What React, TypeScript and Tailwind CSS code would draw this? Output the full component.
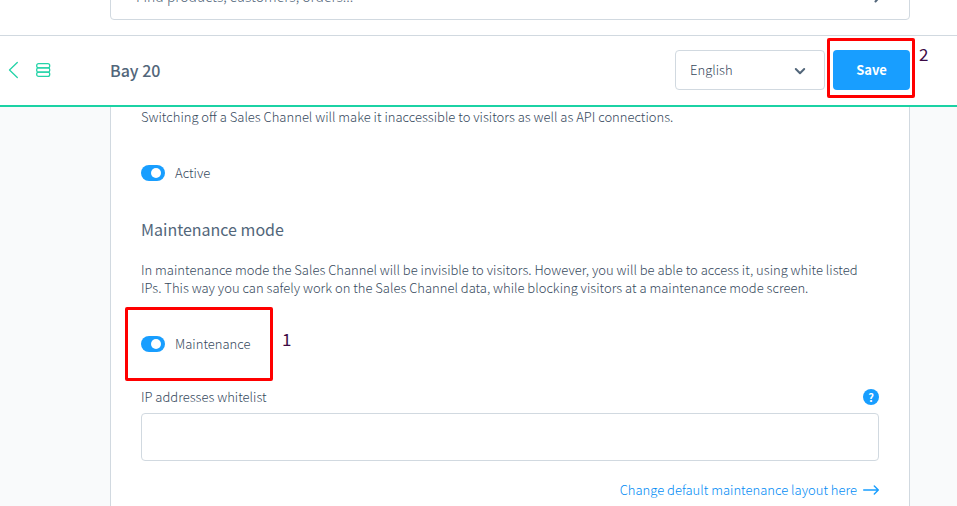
import React, { useState } from 'react';

interface SwitchFieldProps {
  id: string;
  label: string;
  className?: string;
}

const SwitchField: React.FC<SwitchFieldProps> = ({ id, label, className = '' }) => {
  const [checked, setChecked] = useState(true);

  return (
    <div className={`flex items-center gap-[10px] ${className}`}>
      <input
        id={id}
        type="checkbox"
        checked={checked}
        onChange={(e) => setChecked(e.target.checked)}
        className="flex h-4 w-6 appearance-none items-center rounded-full bg-[#d1d9e0] px-1 before:block before:h-[10px] before:w-[10px] before:rounded-full before:bg-white checked:justify-end checked:bg-[#189eff]"
      />
      <label htmlFor={id}>{label}</label>
    </div>
  );
};

const SearchBar = () => (
  <div className="flex h-9 items-end overflow-hidden border-b border-[#d1d9e0] bg-white pr-[47px] pb-[15px] pl-[110px]">
    <div className="flex h-12 flex-1 items-center rounded border border-[#d1d9e0] pr-[27px] pl-[25px]">
      <input
        type="text"
        aria-label="Search"
        placeholder="Find products, customers, orders..."
        className="min-w-0 flex-1 text-sm outline-none placeholder:text-[#52667a]"
      />
      <svg viewBox="0 0 8 14" className="h-[14px] w-2" fill="none" stroke="#52667a" strokeWidth="2" strokeLinecap="round">
        <path d="M1.5 1.5 6.5 7l-5 5.5" />
      </svg>
    </div>
  </div>
);

const PageHeader = () => (
  <header className="flex items-center border-b-2 border-[#1bd2a4] bg-white pt-[14px] pr-[47px] pb-[15px]">
    <div className="flex w-[110px] items-center gap-4 pl-2">
      <a href="#channels" aria-label="Back">
        <svg viewBox="0 0 12 18" className="h-[18px] w-3" fill="none" stroke="#24d3a8" strokeWidth="1.3" strokeLinecap="round" strokeLinejoin="round">
          <path d="M9.3 1.5 1.5 9l7.8 7.5" />
        </svg>
      </a>
      <svg viewBox="0 0 15 14" className="h-[14px] w-[15px]" fill="none" stroke="#24d3a8" strokeWidth="1.3">
        <rect x=".7" y=".7" width="13" height="4.2" rx="1.9" />
        <rect x=".7" y="4.9" width="13" height="4.2" rx="1.6" />
        <rect x=".7" y="9.1" width="13" height="4.2" rx="1.9" />
      </svg>
    </div>
    <h1 className="flex-1 text-base leading-6 font-medium text-[#52667a]">Bay 20</h1>
    <div className="flex gap-2">
      <div className="relative">
        <select
          aria-label="Language"
          className="h-10 w-[150px] appearance-none rounded border border-[#d1d9e0] bg-white px-[14px]"
        >
          <option>English</option>
          <option>Deutsch</option>
        </select>
        <svg viewBox="0 0 12 8" className="pointer-events-none absolute top-[17px] right-[19px] h-2 w-3" fill="none" stroke="#52667a" strokeWidth="2" strokeLinecap="round" strokeLinejoin="round">
          <path d="M1.8 2 6 6.2 10.2 2" />
        </svg>
      </div>
      <div className="relative">
        <button type="button" className="h-10 w-[77px] rounded bg-[#189eff] font-bold text-white">
          Save
        </button>
        <div className="pointer-events-none absolute -top-3 -right-[5px] -bottom-2 -left-[6px] rounded-xs border-3 border-[#ff0000]" />
        <span className="absolute -top-2 left-[86px] text-[17px] leading-6 font-normal text-[#3c0a45]">2</span>
      </div>
    </div>
  </header>
);

export default function App() {
  return (
    <div className="flex h-screen flex-col overflow-hidden bg-[#f9fafb] font-['Noto_Sans_CJK_JP','Noto_Sans',sans-serif] text-[13px] leading-[18px] font-light text-[#36495d]">
      <SearchBar />
      <PageHeader />
      <main className="flex-1 overflow-hidden pr-[47px] pl-[110px]">
        <div className="min-h-full border-x border-[#d1d9e0] bg-white px-[30px] pt-px pb-2">
          <p>Switching off a Sales Channel will make it inaccessible to visitors as well as API connections.</p>
          <SwitchField id="active" label="Active" className="mt-[38px]" />

          <h2 className="mt-[35px] text-base leading-6 font-normal text-[#52667a]">Maintenance mode</h2>
          <p className="mt-5">
            In maintenance mode the Sales Channel will be invisible to visitors. However, you will be able to access it, using
            white listed IPs. This way you can safely work on the Sales Channel data, while blocking visitors at a maintenance
            mode screen.
          </p>
          <div className="relative mt-[38px]">
            <SwitchField id="maintenance" label="Maintenance" />
            <div className="pointer-events-none absolute -top-7 -left-4 h-[74px] w-[148px] rounded-xs border-3 border-[#ff0000]" />
            <span className="absolute -top-2 left-[141px] text-[17px] leading-6 font-normal text-[#3c0a45]">1</span>
          </div>

          <div className="mt-[35px] flex items-center justify-between">
            <label htmlFor="whitelist">IP addresses whitelist</label>
            <button
              type="button"
              aria-label="Help"
              className="h-4 w-4 rounded-full bg-[#189eff] text-center text-[11px] leading-4 font-bold text-white"
            >
              ?
            </button>
          </div>
          <input
            id="whitelist"
            type="text"
            className="mt-[7px] block h-12 w-full rounded border border-[#d1d9e0] bg-white px-4 outline-none"
          />
          <a href="#layout" className="mt-5 flex items-center justify-end gap-[6px] text-[#008bf5]">
            Change default maintenance layout here
            <svg viewBox="0 0 16 10" className="h-[10px] w-4" fill="none" stroke="#189eff" strokeWidth="1.4" strokeLinecap="round" strokeLinejoin="round">
              <path d="M.7 5h14.6M11.3 1l4 4-4 4" />
            </svg>
          </a>
        </div>
      </main>
    </div>
  );
}
